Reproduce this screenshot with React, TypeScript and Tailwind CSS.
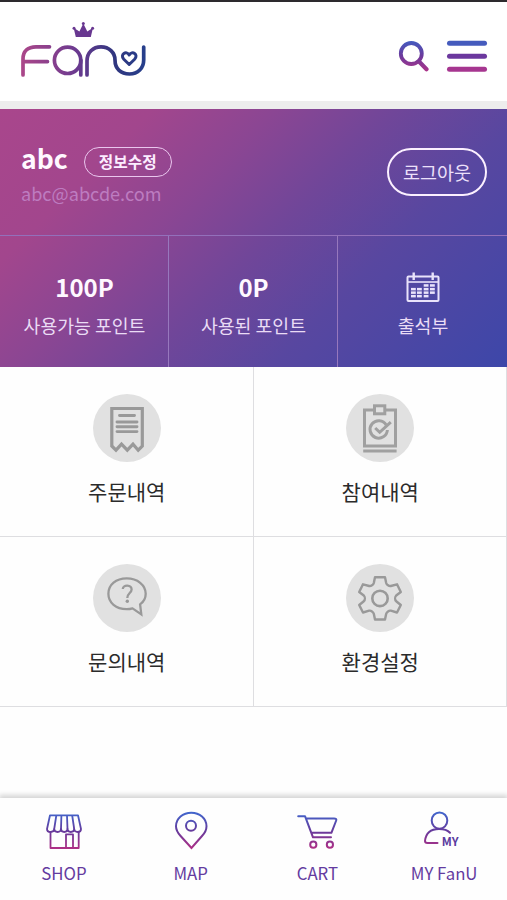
import type { ReactNode } from "react";

function Gradients() {
  return (
    <svg width="0" height="0" className="absolute" aria-hidden="true">
      <defs>
        <linearGradient id="logo" gradientUnits="userSpaceOnUse" x1="20" y1="0" x2="146" y2="0">
          <stop offset="0" stopColor="#ad4789" />
          <stop offset="0.45" stopColor="#6b3a90" />
          <stop offset="0.75" stopColor="#30367f" />
          <stop offset="1" stopColor="#263f8c" />
        </linearGradient>
        <linearGradient id="tool" gradientUnits="userSpaceOnUse" x1="0" y1="1" x2="0" y2="31">
          <stop offset="0" stopColor="#435bc0" />
          <stop offset="0.5" stopColor="#6c3a9c" />
          <stop offset="1" stopColor="#ab3489" />
        </linearGradient>
        <linearGradient id="tab" gradientUnits="userSpaceOnUse" x1="0" y1="2" x2="0" y2="38">
          <stop offset="0" stopColor="#4264cb" />
          <stop offset="0.5" stopColor="#663a9c" />
          <stop offset="1" stopColor="#b02f85" />
        </linearGradient>
      </defs>
    </svg>
  );
}

function Logo() {
  return (
    <svg width="130" height="60" viewBox="18 20 130 60" fill="none" stroke="url(#logo)" strokeWidth="3.7" strokeLinecap="round" strokeLinejoin="round">
      <path d="M23 75V59C23 51 28 46.8 36 46.8H49.5M23 61.6H47.5" />
      <circle cx="67.6" cy="60.3" r="13.2" />
      <path d="M80.8 60V75M87 75V61C87 52.5 93 46.8 101 46.8S115 52.5 115 60C115 69 121 74 129.5 74S143.7 68 143.7 60V47" />
      <path d="M129.2 64.5L123.8 59.2C119.5 54.5 126.5 50 129.2 55C132 50 139 54.5 134.6 59.2Z" strokeWidth="3" />
      <g fill="#683790" stroke="none">
        <path d="M75.8 37L73.6 27.8L79.4 31.4L83.3 23.5L87.3 31.4L93 27.8L90.8 37Z" />
        <circle cx="74" cy="28.2" r="1.5" />
        <circle cx="83.3" cy="23.5" r="1.5" />
        <circle cx="92.6" cy="28.2" r="1.5" />
      </g>
    </svg>
  );
}

function CalendarIcon() {
  const cells: [number, number][] = [];
  [5, 11, 17.7, 24].forEach((x, c) => {
    [12.2, 15.9, 19.4, 22.9].forEach((y, r) => {
      if (c < 2 && r === 0) return;
      if (c === 3 && r === 3) return;
      cells.push([x, y]);
    });
  });
  return (
    <svg width="34" height="31" viewBox="0 0 34 31" fill="none" stroke="#e9e3fb" strokeWidth="2">
      <rect x="1.5" y="4.5" width="31" height="24.5" rx="1" />
      <path d="M1 10H33" strokeWidth="1.6" />
      <path d="M7.7 0.5V8M26.7 0.5V8" strokeWidth="2.4" />
      {cells.map(([x, y]) => (
        <rect key={`${x}-${y}`} x={x} y={y} width="4.8" height="2.5" fill="#e9e3fb" stroke="none" />
      ))}
    </svg>
  );
}

function ReceiptIcon() {
  return (
    <svg width="68" height="68" viewBox="0 0 68 68" fill="none" stroke="#999" strokeWidth="3.2">
      <path d="M18.8 14.5H49.3V52L45.2 56.2L40 50.2L34.3 56.2L28.5 50.2L23 56.2L18.8 52Z" />
      <path d="M26.5 21.5H41.5M24 28H44M24 32.8H44M24 37.6H44" strokeWidth="2.9" strokeLinecap="round" />
    </svg>
  );
}

function ClipboardIcon() {
  return (
    <svg width="68" height="68" viewBox="0 0 68 68" fill="none" stroke="#a0a0a0" strokeWidth="3">
      <path d="M28 16H18.5V52H49.5V16H39" />
      <rect x="28.5" y="11.8" width="10.3" height="8" />
      <path d="M17.2 57H50.6" />
      <path d="M40.2 31A8.7 8.7 0 1 0 41.4 36" />
      <path d="M29.2 34L33.7 38.3L44.8 28.2" />
    </svg>
  );
}

function QuestionIcon() {
  return (
    <svg width="68" height="68" viewBox="0 0 68 68" fill="none" stroke="#999" strokeWidth="2.3">
      <path d="M39.6 44.4Q37 45.2 33.7 45.2C23 45.2 15.4 38.8 15.4 29.8S23 14.4 33.7 14.4S52.7 21 52.7 29.8C52.7 34.5 50.5 38 47.1 40.4L48.3 50.4Z" strokeLinejoin="miter" />
      <path d="M29.8 25C30 20.2 38.6 20.5 38.6 25.5C38.6 29 34.3 29.3 34.3 34" strokeWidth="2.3" />
      <circle cx="34.3" cy="37.2" r="1.7" fill="#999" stroke="none" />
    </svg>
  );
}

function GearIcon() {
  return (
    <svg width="68" height="68" viewBox="0 0 68 68" fill="none" stroke="#999" strokeWidth="2.4">
      <path d="M29 13.3H39L40.2 19C40.7 20.8 43 22.4 44.8 22L51 20.3L54.8 28L50.2 31.5C48.8 33 48.8 35.8 50.2 37.3L54.8 41L51 48.5L44.8 46.7C43 46.3 40.7 48 40.2 49.8L39 55.5H29L27.8 49.8C27.3 48 25 46.3 23.2 46.7L17 48.5L13.2 41L17.8 37.3C19.2 35.8 19.2 33 17.8 31.5L13.2 28L17 20.3L23.2 22C25 22.4 27.3 20.8 27.8 19Z" strokeLinejoin="round" />
      <circle cx="34" cy="34.4" r="7.7" strokeWidth="2.6" />
    </svg>
  );
}

function ShopIcon() {
  return (
    <svg width="44" height="40" viewBox="0 0 44 40" fill="none" stroke="url(#tab)" strokeWidth="1.8" strokeLinejoin="round">
      <path d="M8 4.3H36L39 18C39 22 32.5 22 32.2 18C32 22 25.7 22 25.5 18C25.3 22 19.2 22 19 18C18.7 22 12.4 22 12.2 18C12 22 5 22 5 18Z" />
      <path d="M14.3 4.5L12.2 18M19.4 4.5L19 18M25 4.5L25.5 18M30.2 4.5L32.2 18" />
      <path d="M8.5 21V37H36.7V21M24 37V23.4H31V37" />
    </svg>
  );
}

function PinIcon() {
  return (
    <svg width="44" height="40" viewBox="0 0 44 40" fill="none" stroke="url(#tab)" strokeWidth="2">
      <path d="M22.5 37L11.6 25C8.7 21.8 7 18.8 7 15.2C7 7.2 14 1.7 22.3 1.7S37.5 7.2 37.5 15.2C37.5 18.8 36 21.8 33 25Z" />
      <circle cx="22" cy="14.7" r="5" />
    </svg>
  );
}

function CartIcon() {
  return (
    <svg width="44" height="40" viewBox="0 0 44 40" fill="none" stroke="url(#tab)" strokeWidth="2" strokeLinecap="round" strokeLinejoin="round">
      <path d="M3.2 5.2H10L18 26.3H36M11 7.5H39Q42 7.5 41.2 9.5L36.4 21.8H16.5" />
      <circle cx="18.3" cy="33.7" r="3.1" />
      <circle cx="34.9" cy="33.7" r="3.1" />
    </svg>
  );
}

function MyIcon() {
  return (
    <svg width="44" height="40" viewBox="0 0 44 40" fill="none" stroke="url(#tab)" strokeWidth="2" strokeLinecap="round">
      <ellipse cx="17.5" cy="9.6" rx="7.8" ry="8.2" />
      <path d="M15.5 32H5.5Q3 32 3 30C4 21 10 18 17 18Q24.5 18 28 21.8" />
      <text x="19.7" y="34.6" fill="#5b3c9f" stroke="none" fontSize="11.8" fontWeight="700" fontFamily="Noto Sans CJK KR, sans-serif">
        MY
      </text>
    </svg>
  );
}

function Stat({ label, children }: { label: string; children: ReactNode }) {
  return (
    <div className="flex flex-col items-center border-r border-[#9778bd] pl-px pt-[35px] last:border-r-0">
      <div className="flex h-[32px] items-center text-[24px] font-bold leading-none text-[#fff8ff]">{children}</div>
      <div className="mt-[9px] whitespace-nowrap text-[18.3px] leading-[26px] text-[#eadcf5]">{label}</div>
    </div>
  );
}

function MenuCell({ label, children }: { label: string; children: ReactNode }) {
  return (
    <div className="flex flex-col items-center border-b border-r border-[#dedee1] pl-px pt-[27px]">
      <div className="size-[68px] rounded-full bg-[#e1e1e1]">{children}</div>
      <div className="mt-[14px] text-[21px] leading-[30px] text-[#2b2b2b]">{label}</div>
    </div>
  );
}

function Tab({ label, children }: { label: string; children: ReactNode }) {
  return (
    <div className="flex flex-col items-center pl-px pt-[13px]">
      {children}
      <span className="mt-[9px] whitespace-nowrap text-[16.8px] leading-[26px] text-[#643ba0]">{label}</span>
    </div>
  );
}

export default function App() {
  return (
    <div className="flex h-[900px] w-[507px] flex-col overflow-hidden bg-[#fefefe] font-['Noto_Sans_CJK_KR',sans-serif]">
      <Gradients />
      <header className="flex h-[101px] shrink-0 items-start border-t-2 border-[#2d2a2e] bg-white pl-[18px] pr-[19px] pt-[18px]">
        <Logo />
        <div className="ml-auto mt-[20px] flex gap-[16px]">
          <svg width="32" height="32" viewBox="0 0 32 32" fill="none" stroke="url(#tool)" strokeWidth="3.8" strokeLinecap="round">
            <circle cx="13.3" cy="13.5" r="10.5" />
            <path d="M21 21.5L28.5 29.2" strokeWidth="4.2" />
          </svg>
          <svg width="42" height="32" viewBox="0 0 42 32" strokeWidth="5" strokeLinecap="round">
            <path d="M3.5 3.2H38.5" stroke="#455bbd" />
            <path d="M3.5 16.2H38.5" stroke="#6c389e" />
            <path d="M3.5 29.2H38.5" stroke="#a63690" />
          </svg>
        </div>
      </header>
      <div className="h-[8px] shrink-0 bg-[#ededed]" />
      <section className="flex h-[258px] shrink-0 flex-col bg-[linear-gradient(135deg,#a9468c_0%,#a2468d_20%,#8b4693_36%,#704699_52%,#5847a0_69%,#3d47a9_100%)]">
        <div className="flex h-[126px] items-start justify-between pl-[21px] pr-[20px]">
          <div className="pt-[32px]">
            <div className="flex items-start">
              <b className="text-[26.5px] leading-[34px] text-[#fff8ff]">abc</b>
              <button className="ml-[16px] mt-[6px] flex h-[30px] w-[88px] items-center justify-center rounded-full border-[1.5px] border-[#eac6ee] text-[15.7px] font-bold leading-none text-[#fcedff]">
                정보수정
              </button>
            </div>
            <div className="mt-[2px] text-[18.1px] leading-[28px] text-[#bd7cc0]">abc@abcde.com</div>
          </div>
          <button className="mt-[39px] flex h-[48px] w-[100px] items-center justify-center rounded-full border-[2.5px] border-[#fbf0ff] text-[18.5px] leading-none text-[#ece0fa]">
            로그아웃
          </button>
        </div>
        <div className="grid flex-1 grid-cols-3 border-t border-[#9370bb]">
          <Stat label="사용가능 포인트">100P</Stat>
          <Stat label="사용된 포인트">0P</Stat>
          <Stat label="출석부"><CalendarIcon /></Stat>
        </div>
      </section>
      <section className="grid h-[340px] shrink-0 grid-cols-2 grid-rows-2">
        <MenuCell label="주문내역"><ReceiptIcon /></MenuCell>
        <MenuCell label="참여내역"><ClipboardIcon /></MenuCell>
        <MenuCell label="문의내역"><QuestionIcon /></MenuCell>
        <MenuCell label="환경설정"><GearIcon /></MenuCell>
      </section>
      <nav className="mt-auto grid h-[102px] shrink-0 grid-cols-4 bg-[#fefefe] shadow-[0_-2px_5px_1px_#d4d4d4]">
        <Tab label="SHOP"><ShopIcon /></Tab>
        <Tab label="MAP"><PinIcon /></Tab>
        <Tab label="CART"><CartIcon /></Tab>
        <Tab label="MY FanU"><MyIcon /></Tab>
      </nav>
    </div>
  );
}
